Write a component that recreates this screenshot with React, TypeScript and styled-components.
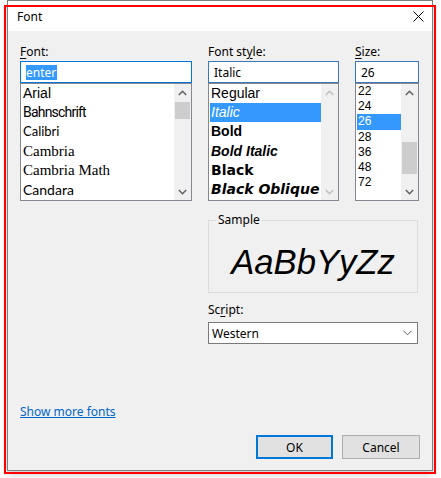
import React from "react";
import styled, { createGlobalStyle } from "styled-components";

const Global = createGlobalStyle`
  html, body { margin: 0; padding: 0; background: #ffffff; }
  body { width: 441px; height: 478px; overflow: hidden; font-family: "Noto Sans", sans-serif; }
`;

const UI = `"Noto Sans", "Open Sans", sans-serif`;

const Stage = styled.div`
  position: relative;
  width: 441px;
  height: 478px;
`;

const Window = styled.div`
  margin-left: 7px;
  width: 426px;
  height: 471px;
  box-sizing: border-box;
  border: 1px solid #7f7f7f;
  background: #f0f0f0;
  display: flex;
  flex-direction: column;
  box-shadow: 0 3px 8px rgba(0, 0, 0, 0.22);
`;

const TitleBar = styled.div`
  height: 30px;
  flex: none;
  background: #ffffff;
  display: flex;
  align-items: center;
  padding: 0 8px 0 9px;
  font: 12px ${UI};
  color: #000;
`;

const TitleText = styled.span`
  flex: 1;
`;

const Body = styled.div`
  flex: 1;
  display: flex;
  flex-direction: column;
  padding: 13px 12px 11px 12px;
  font: 12px ${UI};
  color: #000;
`;

const Columns = styled.div`
  display: grid;
  grid-template-columns: 172px 131px 64px;
  column-gap: 16px;
`;

const Column = styled.div`
  display: flex;
  flex-direction: column;
`;

const Label = styled.div<{ $gap?: number }>`
  height: 15px;
  line-height: 15px;
  margin-bottom: ${(p) => p.$gap ?? 2}px;
  white-space: nowrap;
`;

const Key = styled.span`
  text-decoration: underline;
  text-underline-offset: 2px;
`;

const TextBox = styled.div<{ $focused?: boolean }>`
  height: 22px;
  box-sizing: border-box;
  border: 1px solid ${(p) => (p.$focused ? "#0078d7" : "#3a78bd")};
  background: #fff;
  display: flex;
  align-items: center;
  padding: 0 5px;
  white-space: nowrap;
`;

const Selection = styled.span`
  background: #3399ff;
  color: #fff;
  line-height: 15px;
  padding-right: 1px;
`;

const ListBox = styled.div`
  height: 118px;
  box-sizing: border-box;
  border: 1px solid #828790;
  background: #fff;
  display: flex;
  overflow: hidden;
`;

const Items = styled.div`
  flex: 1;
  overflow: hidden;
  padding-left: 1px;
  min-width: 0;
`;

const Item = styled.div<{
  $family?: string;
  $size?: number;
  $h: number;
  $italic?: boolean;
  $weight?: number;
  $spacing?: number;
  $selected?: boolean;
}>`
  height: ${(p) => p.$h}px;
  line-height: ${(p) => p.$h}px;
  padding-left: 1px;
  white-space: nowrap;
  overflow: hidden;
  font-family: ${(p) => p.$family ?? UI};
  font-size: ${(p) => p.$size ?? 12}px;
  font-style: ${(p) => (p.$italic ? "italic" : "normal")};
  font-weight: ${(p) => p.$weight ?? 400};
  letter-spacing: ${(p) => p.$spacing ?? 0}px;
  background: ${(p) => (p.$selected ? "#3399ff" : "transparent")};
  color: ${(p) => (p.$selected ? "#fff" : "#000")};
`;

const ScrollBar = styled.div`
  width: 17px;
  flex: none;
  background: #f0f0f0;
  display: flex;
  flex-direction: column;
`;

const ArrowBtn = styled.div`
  height: 17px;
  flex: none;
  display: flex;
  align-items: center;
  justify-content: center;
`;

const Track = styled.div`
  flex: 1;
  display: flex;
  flex-direction: column;
`;

const Thumb = styled.div<{ $top: number; $h: number }>`
  margin: ${(p) => p.$top}px 1px 0 1px;
  height: ${(p) => p.$h}px;
  background: #cdcdcd;
`;

const RightArea = styled.div`
  margin-left: 188px;
  width: 210px;
  display: flex;
  flex-direction: column;
`;

const GroupBox = styled.div`
  position: relative;
  margin-top: 19px;
  height: 73px;
  box-sizing: border-box;
  border: 1px solid #dcdcdc;
`;

const GroupLegend = styled.span`
  position: absolute;
  left: 7px;
  top: -9px;
  padding: 0 2px;
  line-height: 15px;
  background: #f0f0f0;
`;

const SampleText = styled.div`
  padding-top: 24px;
  text-align: center;
  font-family: "Liberation Sans", Arial, sans-serif;
  font-style: italic;
  font-size: 34.67px;
  line-height: 1;
  white-space: nowrap;
`;

const ScriptBlock = styled.div`
  margin-top: 9px;
  display: flex;
  flex-direction: column;
`;

const Select = styled.div`
  height: 22px;
  box-sizing: border-box;
  border: 1px solid #7a7a7a;
  background: #fff;
  display: flex;
  align-items: center;
  justify-content: space-between;
  padding: 0 5px 0 3px;
`;

const Spacer = styled.div`
  flex: 1;
`;

const Link = styled.a`
  align-self: flex-start;
  line-height: 15px;
  color: #0066cc;
  text-decoration: underline;
  text-underline-offset: 1px;
  cursor: pointer;
`;

const ButtonRow = styled.div`
  margin-top: 16px;
  display: flex;
  justify-content: flex-end;
  gap: 9px;
`;

const Button = styled.button<{ $default?: boolean; $w: number }>`
  width: ${(p) => p.$w}px;
  height: 24px;
  box-sizing: border-box;
  margin: 0;
  padding: 0;
  background: #e1e1e1;
  border: ${(p) => (p.$default ? "2px solid #0078d7" : "1px solid #adadad")};
  font: 12px ${UI};
  color: #000;
`;

const Highlight = styled.div`
  position: absolute;
  left: 4px;
  top: 5px;
  width: 432px;
  height: 469px;
  box-sizing: border-box;
  border: 2px solid #ff0000;
  pointer-events: none;
`;

const Chevron = ({ up, color }: { up?: boolean; color: string }) => (
  <svg width="9" height="6" viewBox="0 0 9 6">
    <polyline
      points={up ? "0.8,5 4.5,1.3 8.2,5" : "0.8,1 4.5,4.7 8.2,1"}
      fill="none"
      stroke={color}
      strokeWidth="1.5"
    />
  </svg>
);

const Scroll = ({
  thumb,
  disabled,
}: {
  thumb?: { top: number; h: number };
  disabled?: boolean;
}) => {
  const c = disabled ? "#bfbfbf" : "#606060";
  return (
    <ScrollBar>
      <ArrowBtn>
        <Chevron up color={c} />
      </ArrowBtn>
      <Track>{thumb && <Thumb $top={thumb.top} $h={thumb.h} />}</Track>
      <ArrowBtn>
        <Chevron color={c} />
      </ArrowBtn>
    </ScrollBar>
  );
};

const fonts = [
  { label: "Arial", family: '"Liberation Sans", sans-serif', size: 14 },
  { label: "Bahnschrift", family: "Roboto, sans-serif", size: 14, spacing: -0.8 },
  { label: "Calibri", family: "Lato, sans-serif", size: 13 },
  { label: "Cambria", family: '"Liberation Serif", serif', size: 15 },
  { label: "Cambria Math", family: '"Liberation Serif", serif', size: 15 },
  { label: "Candara", family: "Lato, sans-serif", size: 14 },
];

const styles = [
  { label: "Regular", family: '"Liberation Sans", sans-serif', weight: 400 },
  { label: "Italic", family: '"Liberation Sans", sans-serif', weight: 400, italic: true, selected: true },
  { label: "Bold", family: '"Liberation Sans", sans-serif', weight: 700 },
  { label: "Bold Italic", family: '"Liberation Sans", sans-serif', weight: 700, italic: true },
  { label: "Black", family: '"DejaVu Sans", sans-serif', weight: 700 },
  { label: "Black Oblique", family: '"DejaVu Sans", sans-serif', weight: 700, italic: true },
];

const sizes = ["22", "24", "26", "28", "36", "48", "72"];
const SIZE_FONT = '"Liberation Sans", Arial, sans-serif';

export default function App() {
  return (
    <Stage>
      <Global />
      <Window>
        <TitleBar>
          <TitleText>Font</TitleText>
          <svg width="11" height="11" viewBox="0 0 11 11">
            <path d="M0.5 0.5 L10.5 10.5 M10.5 0.5 L0.5 10.5" stroke="#000" strokeWidth="1" fill="none" />
          </svg>
        </TitleBar>
        <Body>
          <Columns>
            <Column>
              <Label>
                <Key>F</Key>ont:
              </Label>
              <TextBox $focused>
                <Selection>enter</Selection>
              </TextBox>
              <ListBox>
                <Items>
                  {fonts.map((f) => (
                    <Item key={f.label} $h={19.2} $family={f.family} $size={f.size} $spacing={f.spacing}>
                      {f.label}
                    </Item>
                  ))}
                </Items>
                <Scroll thumb={{ top: 1, h: 17 }} />
              </ListBox>
            </Column>
            <Column>
              <Label>
                Font st<Key>y</Key>le:
              </Label>
              <TextBox>Italic</TextBox>
              <ListBox>
                <Items>
                  {styles.map((s) => (
                    <Item
                      key={s.label}
                      $h={19.2}
                      $family={s.family}
                      $size={14}
                      $weight={s.weight}
                      $italic={s.italic}
                      $selected={s.selected}
                    >
                      {s.label}
                    </Item>
                  ))}
                </Items>
                <Scroll disabled />
              </ListBox>
            </Column>
            <Column>
              <Label>
                <Key>S</Key>ize:
              </Label>
              <TextBox>26</TextBox>
              <ListBox>
                <Items>
                  {sizes.map((s) => (
                    <Item key={s} $h={15.2} $family={SIZE_FONT} $selected={s === "26"}>
                      {s}
                    </Item>
                  ))}
                </Items>
                <Scroll thumb={{ top: 41, h: 32 }} />
              </ListBox>
            </Column>
          </Columns>
          <RightArea>
            <GroupBox>
              <GroupLegend>Sample</GroupLegend>
              <SampleText>AaBbYyZz</SampleText>
            </GroupBox>
            <ScriptBlock>
              <Label $gap={5}>
                Sc<Key>r</Key>ipt:
              </Label>
              <Select>
                <span>Western</span>
                <svg width="9" height="6" viewBox="0 0 9 6">
                  <polyline points="0.5,0.8 4.5,4.8 8.5,0.8" fill="none" stroke="#555" strokeWidth="1" />
                </svg>
              </Select>
            </ScriptBlock>
          </RightArea>
          <Spacer />
          <Link>Show more fonts</Link>
          <ButtonRow>
            <Button $default $w={77}>OK</Button>
            <Button $w={78}>Cancel</Button>
          </ButtonRow>
        </Body>
      </Window>
      <Highlight />
    </Stage>
  );
}
